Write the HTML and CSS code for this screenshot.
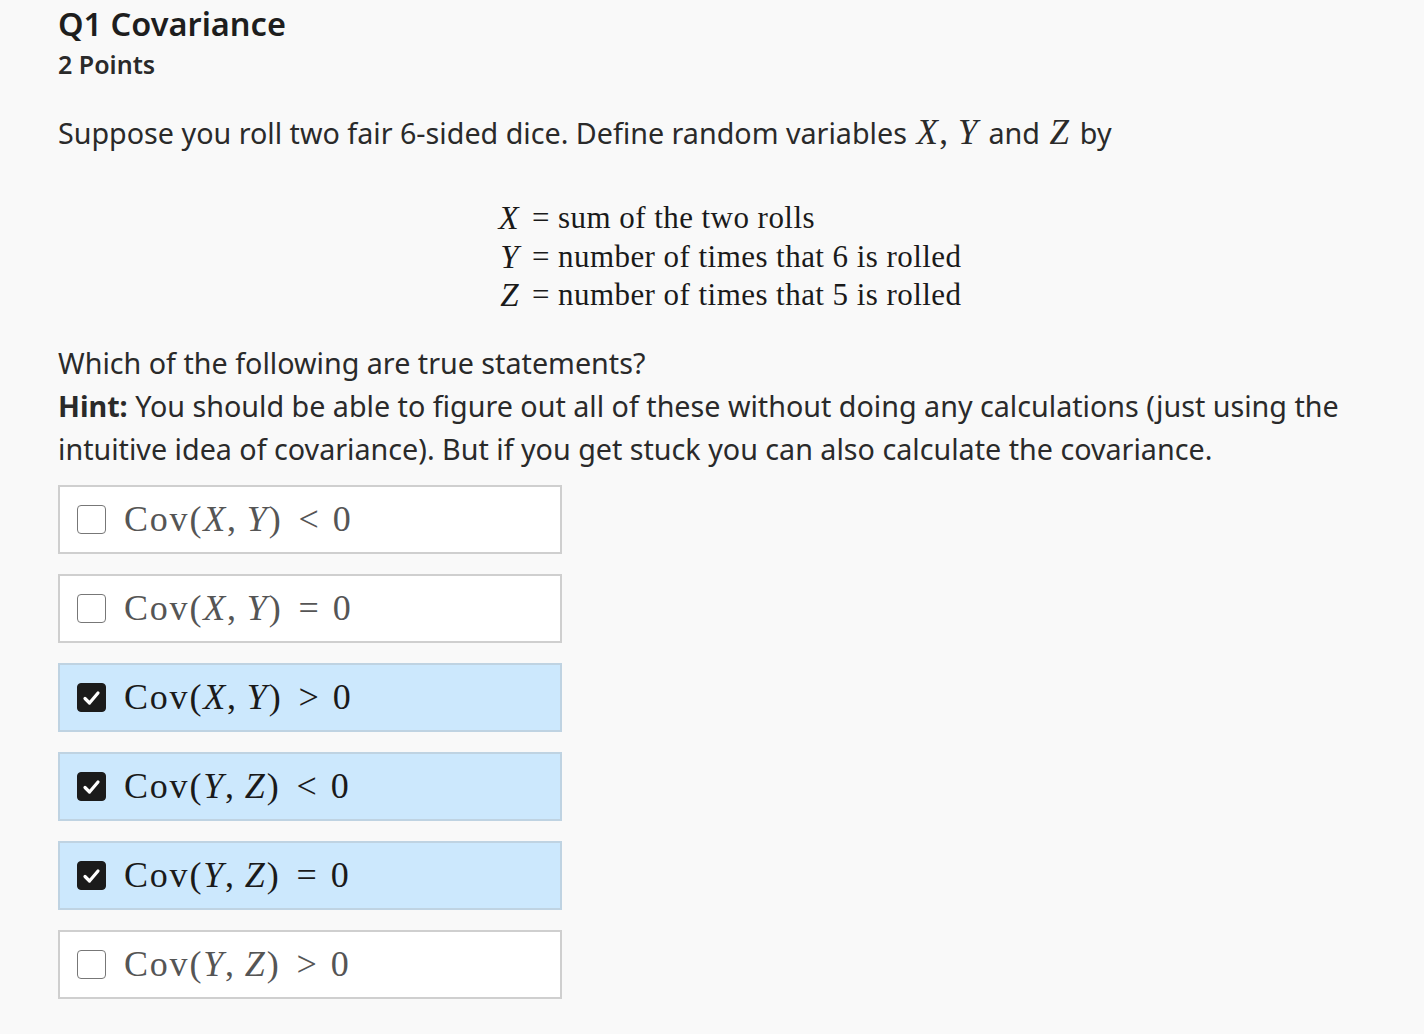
FILE: index.html
```html
<!DOCTYPE html>
<html>
<head>
<meta charset="utf-8">
<link rel="stylesheet" href="styles.css">
</head>
<body>
<div class="page">
  <h1 class="title">Q1 Covariance</h1>
  <div class="points">2 Points</div>
  <p class="intro">Suppose you roll two fair 6-sided dice. Define random variables <span class="m"><i>X</i>,&thinsp;<i>Y</i></span> and <span class="m"><i>Z</i></span> by</p>
  <div class="display">
    <div class="var"><i>X</i></div><div class="def"><span class="eq">=</span>sum of the two rolls</div>
    <div class="var"><i>Y</i></div><div class="def"><span class="eq">=</span>number of times that 6 is rolled</div>
    <div class="var"><i>Z</i></div><div class="def"><span class="eq">=</span>number of times that 5 is rolled</div>
  </div>
  <p class="question">Which of the following are true statements?<br><b>Hint:</b> You should be able to figure out all of these without doing any calculations (just using the intuitive idea of covariance). But if you get stuck you can also calculate the covariance.</p>
  <div class="options">
    <div class="option"><span class="box"></span><span class="expr"><span class="lhs">Cov(<i>X</i>,&thinsp;<i>Y</i>)</span><span class="rel">&lt;</span>0</span></div>
    <div class="option"><span class="box"></span><span class="expr"><span class="lhs">Cov(<i>X</i>,&thinsp;<i>Y</i>)</span><span class="rel">=</span>0</span></div>
    <div class="option checked"><span class="box"><svg viewBox="0 0 29 29" width="29" height="29"><path d="M8 15.5 L12.5 20 L21 10" fill="none" stroke="#fff" stroke-width="3.2" stroke-linecap="round" stroke-linejoin="round"/></svg></span><span class="expr"><span class="lhs">Cov(<i>X</i>,&thinsp;<i>Y</i>)</span><span class="rel">&gt;</span>0</span></div>
    <div class="option checked"><span class="box"><svg viewBox="0 0 29 29" width="29" height="29"><path d="M8 15.5 L12.5 20 L21 10" fill="none" stroke="#fff" stroke-width="3.2" stroke-linecap="round" stroke-linejoin="round"/></svg></span><span class="expr"><span class="lhs">Cov(<i>Y</i>,&thinsp;<i>Z</i>)</span><span class="rel">&lt;</span>0</span></div>
    <div class="option checked"><span class="box"><svg viewBox="0 0 29 29" width="29" height="29"><path d="M8 15.5 L12.5 20 L21 10" fill="none" stroke="#fff" stroke-width="3.2" stroke-linecap="round" stroke-linejoin="round"/></svg></span><span class="expr"><span class="lhs">Cov(<i>Y</i>,&thinsp;<i>Z</i>)</span><span class="rel">=</span>0</span></div>
    <div class="option"><span class="box"></span><span class="expr"><span class="lhs">Cov(<i>Y</i>,&thinsp;<i>Z</i>)</span><span class="rel">&gt;</span>0</span></div>
  </div>
</div>
</body>
</html>
```

FILE: styles.css
```css
html, body {
  margin: 0;
  padding: 0;
  background: #f9f9f9;
}
body {
  font-family: "Noto Sans", "Open Sans", sans-serif;
  color: #2a2a2a;
}
.page {
  width: 1344px;
  padding: 4px 0 0 58px;
}
.title {
  margin: 0;
  font-size: 32.5px;
  line-height: 40px;
  font-weight: 600;
  color: #1e1e1e;
}
.points {
  margin-top: 0;
  font-size: 25px;
  line-height: 40px;
  font-weight: 600;
  color: #2a2a2a;
}
.intro {
  margin: 27px 0 0 0;
  font-size: 28.7px;
  line-height: 43px;
}
.m {
  font-family: "Liberation Serif", "DejaVu Serif", serif;
  font-size: 35px;
  line-height: 20px;
  letter-spacing: 1.5px;
  margin: 0 2px;
}
.m i {
  font-style: italic;
}
.display {
  margin: 45px auto 0 auto;
  display: grid;
  grid-template-columns: auto auto;
  justify-content: center;
  column-gap: 0;
  font-family: "Liberation Serif", "DejaVu Serif", serif;
  font-size: 31px;
  line-height: 38.5px;
  letter-spacing: 0.45px;
  color: #1a1a1a;
}
.var {
  text-align: right;
  font-size: 33px;
}
.eq {
  margin: 0 8px 0 13px;
}
.question {
  margin: 26px 0 0 0;
  font-size: 28.7px;
  line-height: 43px;
}
.options {
  margin-top: 15px;
  display: flex;
  flex-direction: column;
  gap: 20px;
  width: 504px;
}
.option {
  box-sizing: border-box;
  height: 69px;
  border: 2px solid #cfcfcf;
  background: #ffffff;
  display: flex;
  align-items: center;
  padding-left: 17px;
  gap: 18px;
}
.option.checked {
  background: #cce8fd;
  border-color: #bfd3e2;
}
.box {
  box-sizing: border-box;
  width: 29px;
  height: 29px;
  border: 1.5px solid #777;
  border-radius: 4px;
  background: #fff;
  display: flex;
  align-items: center;
  justify-content: center;
}
.checked .box {
  background: #1b1b1b;
  border-color: #1b1b1b;
}
.box svg {
  display: block;
  flex: none;
}
.expr {
  font-family: "Liberation Serif", "DejaVu Serif", serif;
  font-size: 36px;
  color: #555;
  white-space: nowrap;
}
.lhs {
  letter-spacing: 1.8px;
}
.rel {
  margin: 0 14px 0 16px;
}
.checked .expr {
  color: #1a1a1a;
}
```
